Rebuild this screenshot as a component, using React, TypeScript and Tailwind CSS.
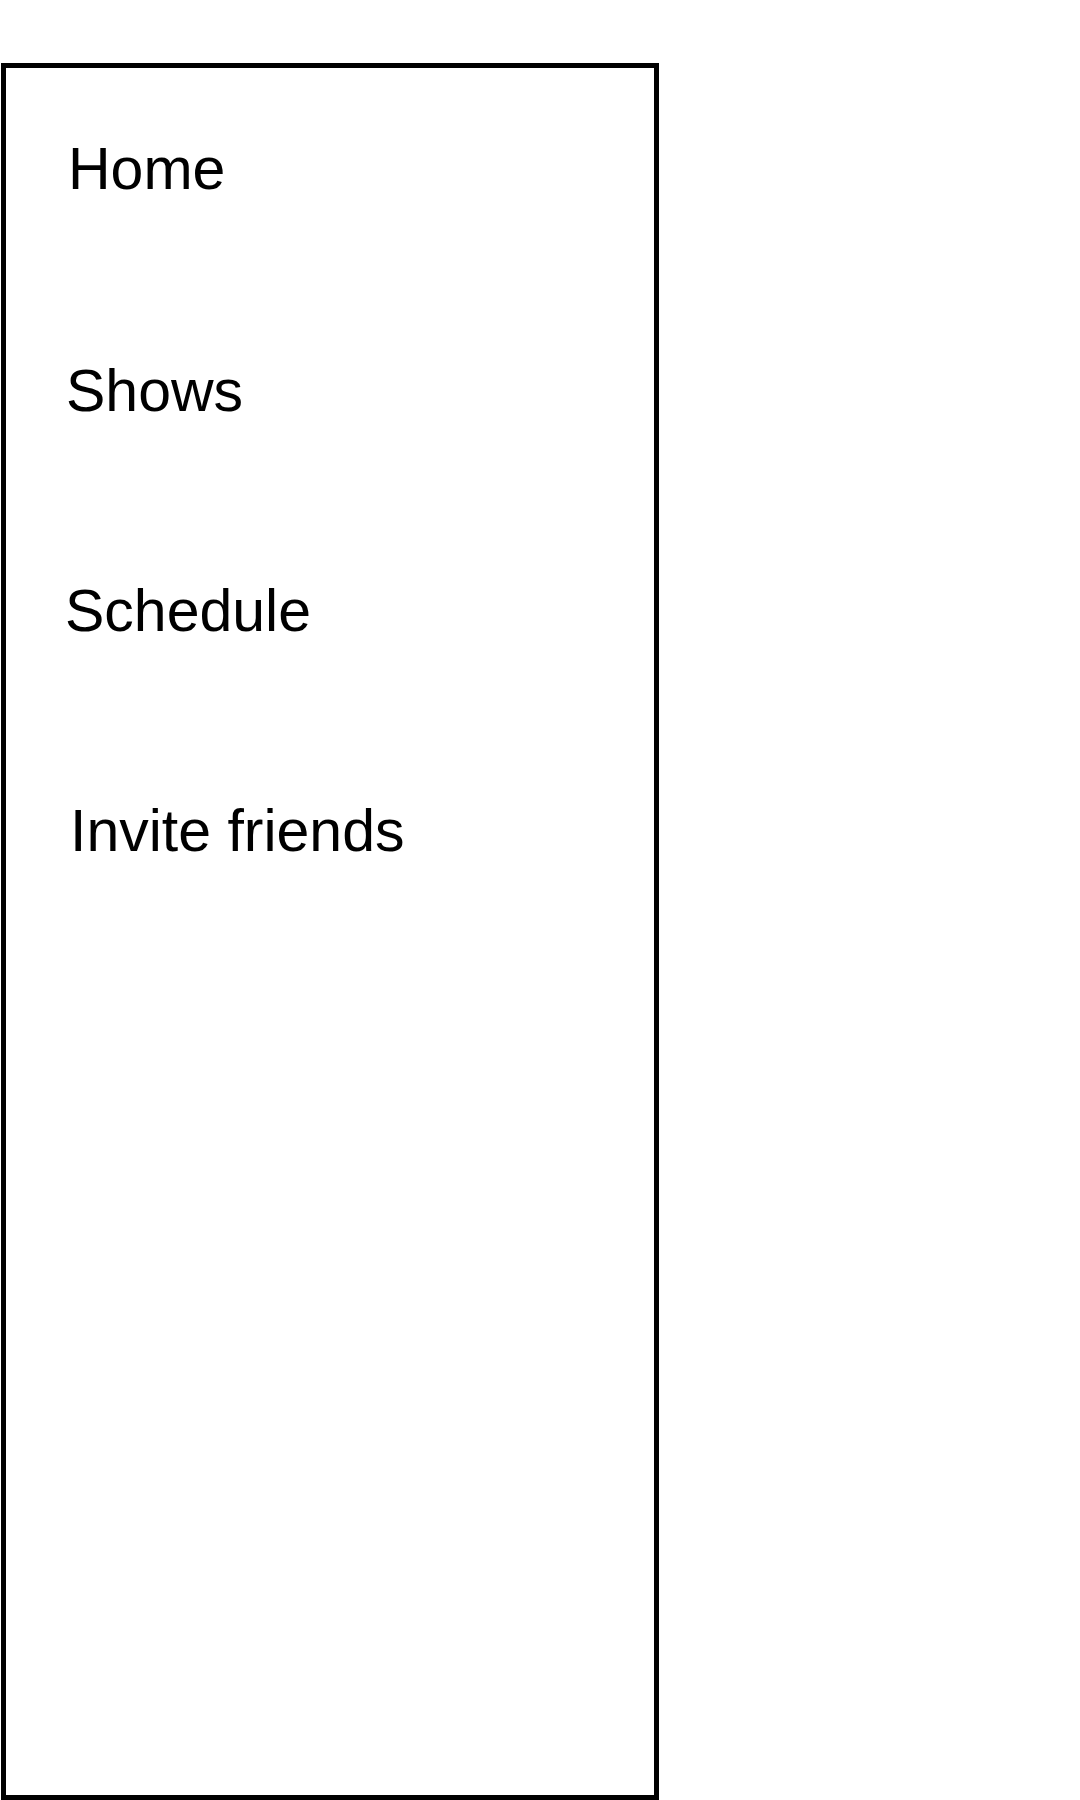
const items = [
  { label: "Home", className: "pl-[62px]" },
  { label: "Shows", className: "pl-[60px] mt-[163px]" },
  { label: "Schedule", className: "pl-[59px] mt-[161px]" },
  { label: "Invite friends", className: "pl-[64px] mt-[161px]" },
]

export default function App() {
  return (
    <div className="w-[1080px] h-[1800px] bg-white overflow-hidden font-['Liberation_Sans',Arial,sans-serif] text-black">
      <nav className="ml-[1px] mt-[63px] w-[658px] h-[1737px] border-[5px] border-black flex flex-col pt-[72px]">
        {items.map((item) => (
          <a key={item.label} href="#" className={`block text-[59px] leading-[59px] ${item.className}`}>
            {item.label}
          </a>
        ))}
      </nav>
    </div>
  )
}
